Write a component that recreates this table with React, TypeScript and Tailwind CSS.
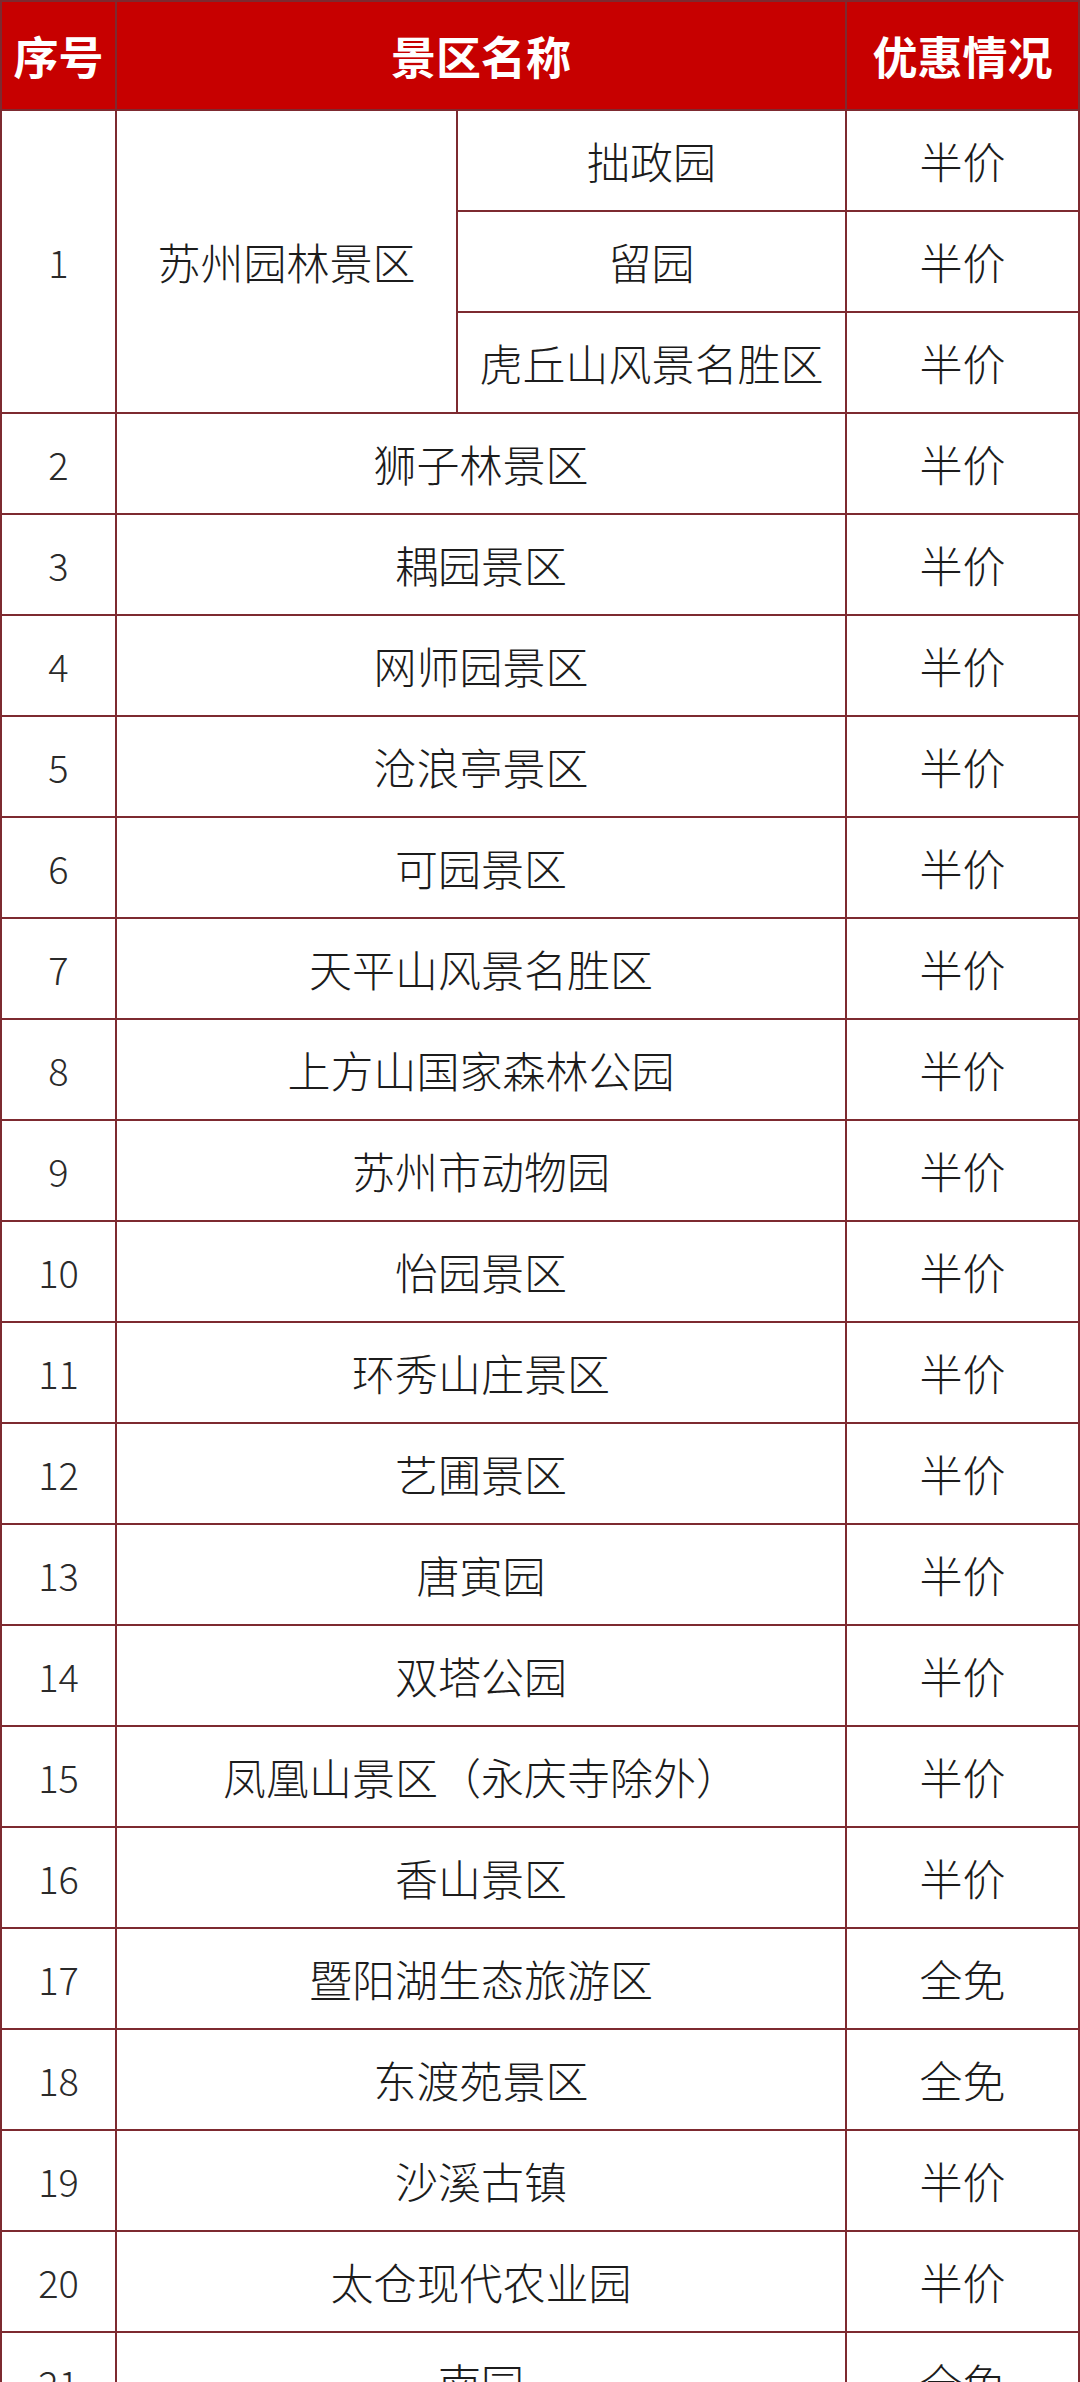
import { Fragment } from "react";

const SUB_ROWS = ["拙政园", "留园", "虎丘山风景名胜区"];

const ROWS: [number, string, string][] = [
  [2, "狮子林景区", "半价"],
  [3, "耦园景区", "半价"],
  [4, "网师园景区", "半价"],
  [5, "沧浪亭景区", "半价"],
  [6, "可园景区", "半价"],
  [7, "天平山风景名胜区", "半价"],
  [8, "上方山国家森林公园", "半价"],
  [9, "苏州市动物园", "半价"],
  [10, "怡园景区", "半价"],
  [11, "环秀山庄景区", "半价"],
  [12, "艺圃景区", "半价"],
  [13, "唐寅园", "半价"],
  [14, "双塔公园", "半价"],
  [15, "凤凰山景区（永庆寺除外）", "半价"],
  [16, "香山景区", "半价"],
  [17, "暨阳湖生态旅游区", "全免"],
  [18, "东渡苑景区", "全免"],
  [19, "沙溪古镇", "半价"],
  [20, "太仓现代农业园", "半价"],
  [21, "南园", "全免"],
];

const cell = "bg-white flex items-center justify-center text-[43px] font-light text-[#1c1c1c] leading-none";
const num = "bg-white flex items-center justify-center text-[38px] font-light text-[#2a2a2a] leading-none";
const head = "bg-[#c70000] flex items-center justify-center text-[45px] font-bold text-white leading-none";

export default function App() {
  return (
    <div
      className="w-[1080px] h-[2382px] overflow-hidden bg-white"
      style={{ fontFamily: '"Noto Sans CJK SC", "Noto Sans", sans-serif' }}
    >
      <div className="grid grid-cols-[113px_339px_387px_231px] grid-rows-[107px] auto-rows-[99px] gap-[2px] bg-[#7d2a30] p-[2px]">
        {/* Header */}
        <div className={head}>序号</div>
        <div className={`${head} col-span-2`}>景区名称</div>
        <div className={head}>优惠情况</div>

        {/* Row 1 with sub rows */}
        <div className={`${num} row-span-3`}>1</div>
        <div className={`${cell} row-span-3`}>苏州园林景区</div>
        {SUB_ROWS.map((name) => (
          <Fragment key={name}>
            <div className={cell}>{name}</div>
            <div className={cell}>半价</div>
          </Fragment>
        ))}

        {ROWS.map(([n, name, price]) => (
          <Fragment key={n}>
            <div className={num}>{n}</div>
            <div className={`${cell} col-span-2`}>{name}</div>
            <div className={cell}>{price}</div>
          </Fragment>
        ))}
      </div>
    </div>
  );
}
